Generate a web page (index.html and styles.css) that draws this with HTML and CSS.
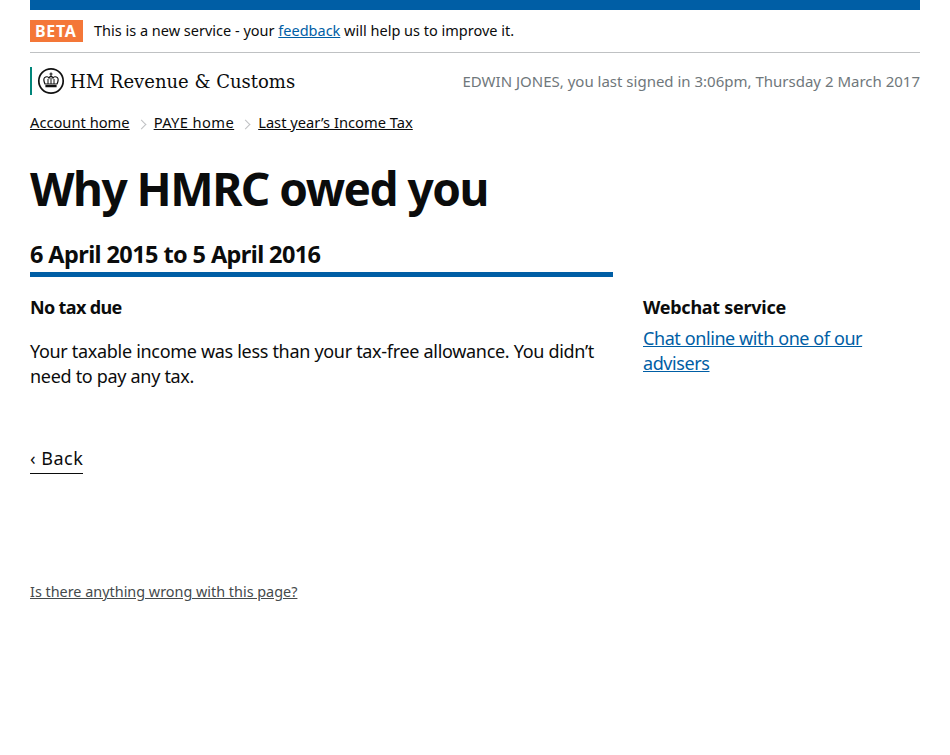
FILE: index.html
```html
<!DOCTYPE html>
<html lang="en">
  <head>
    <meta charset="UTF-8">
    <title>Why HMRC owed you</title>
    <link rel="stylesheet" href="styles.css">
  </head>
  <body>
    <div class="topbar"></div>
    <div class="beta">
      <span class="beta-tag">BETA</span>
      <span class="beta-text">This is a new service - your <a class="link" href="#">feedback</a> will help us to improve it.</span>
    </div>
    <header class="masthead">
      <div class="org">
        <svg class="crest" viewBox="0 0 28 28" width="28" height="28">
          <circle cx="14" cy="14" r="12.2" fill="none" stroke="#111" stroke-width="1.7"/>
          <path d="M7.6 10.6c1.6-1.4 3.6-1 4.4.4.4-1 1.1-1.6 2-1.6s1.600.6 2 1.600c.8-1.400 2.800-1.800 4.400-.4 1.300 1.200 1 3.200-.4 6.400h-12c-1.400-3.200-1.700-5.200-.4-6.400z" fill="none" stroke="#111" stroke-width="1.200"/>
          <path d="M14 10.400v6.600M11 12v5M17 12v5" stroke="#111" stroke-width="1"/>
          <path d="M14 5.600v3.400M12.500 7h3" stroke="#111" stroke-width="1.100"/>
          <path d="M8.400 18h11.200v2.200h-11.200z" fill="#111"/>
        </svg>
        <span class="org-name">HM Revenue &amp; Customs</span>
      </div>
      <p class="signed-in">EDWIN JONES, you last signed in 3:06pm, Thursday 2 March 2017</p>
    </header>
    <nav class="crumbs">
      <a href="#">Account home</a>
      <span class="chevron"></span>
      <a class="crumb-wide" href="#">PAYE home</a>
      <span class="chevron"></span>
      <a href="#">Last year’s Income Tax</a>
    </nav>
    <h1>Why HMRC owed you</h1>
    <div class="columns">
      <main class="main-col">
        <h2>6 April 2015 to 5 April 2016</h2>
        <h3>No tax due</h3>
        <p class="body-text">Your taxable income was less than your tax-free allowance. You didn’t need to pay any tax.</p>
        <a class="back" href="#">‹ Back</a>
      </main>
      <aside class="side-col">
        <h3>Webchat service</h3>
        <a class="link side-link" href="#">Chat online with one of our advisers</a>
      </aside>
    </div>
    <a class="report" href="#">Is there anything wrong with this page?</a>
  </body>
</html>
```

FILE: styles.css
```css
* {
  box-sizing: border-box;
}
body {
  margin: 0;
  padding: 0 30px;
  font-family: "Noto Sans", "Open Sans", sans-serif;
  color: #0b0c0c;
  background: #fff;
}
.link {
  color: #005ea5;
}
.topbar {
  height: 10px;
  background: #005ea5;
}
.beta {
  display: flex;
  align-items: center;
  gap: 11px;
  height: 43px;
  padding-top: 10px;
  padding-bottom: 10px;
  border-bottom: 1px solid #bfc1c3;
  font-size: 14.500px;
}
.beta-tag {
  background: #f47738;
  color: #fff;
  font-weight: 700;
  font-size: 16px;
  letter-spacing: 0.7px;
  line-height: 22px;
  padding: 0 5px;
  width: 53px;
}
.beta-text {
  margin-bottom: 3px;
}
.masthead {
  display: flex;
  justify-content: space-between;
  align-items: center;
  margin-top: 14px;
  height: 28px;
}
.org {
  display: flex;
  align-items: center;
  gap: 5px;
  border-left: 2px solid #00857a;
  padding-left: 5px;
  height: 28px;
}
.org-name {
  font-family: "DejaVu Serif", "Liberation Serif", serif;
  font-size: 18px;
}
.signed-in {
  margin: 0;
  font-size: 15px;
  color: #6f777b;
}
.crumbs {
  display: flex;
  align-items: center;
  margin-top: 17px;
  font-size: 14.700px;
  line-height: 20px;
}
.crumbs a {
  color: #0b0c0c;
}
.crumb-wide {
  letter-spacing: 0.4px;
}
.chevron {
  width: 7px;
  height: 7px;
  margin: 4px 9px 0 8px;
  border-top: 1px solid #bfc1c3;
  border-right: 1px solid #bfc1c3;
  transform: rotate(45deg);
}
h1 {
  margin: 28px 0 0;
  font-size: 46px;
  line-height: 56px;
  font-weight: 700;
  letter-spacing: -1.5px;
}
.columns {
  display: flex;
  gap: 30px;
  margin-top: 22px;
}
.main-col {
  width: 583px;
}
.side-col {
  flex: 1;
  padding-top: 39px;
}
h2 {
  margin: 0;
  font-size: 23.500px;
  line-height: 33px;
  font-weight: 700;
  letter-spacing: -0.6px;
  padding-bottom: 1px;
  border-bottom: 5px solid #005ea5;
}
h3 {
  margin: 0;
  font-size: 18px;
  line-height: 25px;
  font-weight: 700;
}
.main-col h3 {
  margin-top: 18px;
  letter-spacing: -0.65px;
}
.side-col h3 {
  margin-top: 18px;
  letter-spacing: -0.27px;
}
.body-text {
  margin: 19px 0 0;
  font-size: 18px;
  line-height: 25px;
  letter-spacing: -0.31px;
}
.side-link {
  display: block;
  margin-top: 6px;
  font-size: 18px;
  line-height: 25px;
  letter-spacing: -0.41px;
}
.back {
  display: inline-block;
  margin-top: 57px;
  font-size: 18px;
  line-height: 25px;
  letter-spacing: 0.5px;
  padding-bottom: 2px;
  border-bottom: 1px solid #0b0c0c;
  color: #0b0c0c;
  text-decoration: none;
}
.report {
  display: block;
  margin-top: 108px;
  font-size: 14.400px;
  color: #454a4c;
}
```
